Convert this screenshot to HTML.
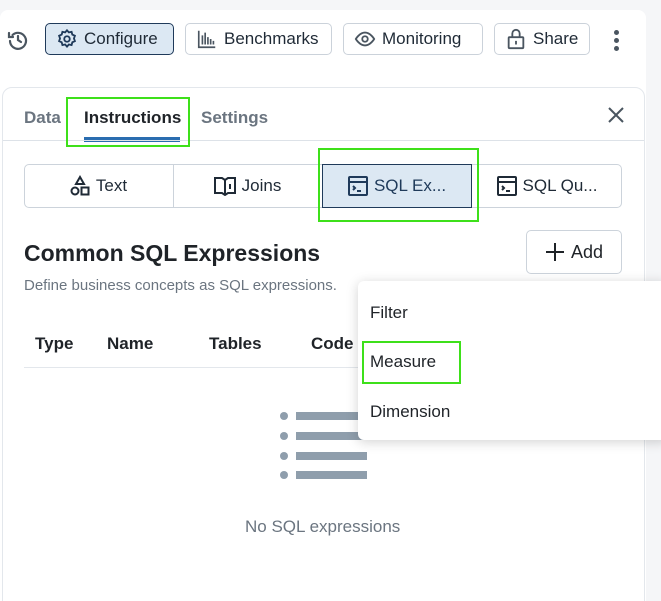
<!DOCTYPE html>
<html style="width:661px;height:601px;overflow:hidden"><head><style>
*{box-sizing:border-box;margin:0;padding:0}
body{width:661px;height:601px;overflow:hidden;background:#f5f6f8;font-family:"Liberation Sans",sans-serif;position:relative;color:#1f2328}
.abs{position:absolute}
.card{left:0;top:10px;width:646px;height:591px;background:#fff;border-radius:8px 8px 0 0}
.btn{position:absolute;top:23px;height:32px;border:1px solid #cbd2da;border-radius:5px;background:#fff;font-size:17px;color:#1f2a36;display:flex;align-items:center;padding-left:10px;gap:6px}
.panel{left:2px;top:87px;width:643px;height:530px;border:1px solid #e3e7ec;border-radius:10px;background:#fff}
.tab{position:absolute;top:108px;font-size:17px;font-weight:bold;color:#6b7580}
.seg{left:24px;top:164px;width:598px;height:44px;border:1px solid #ccd3db;border-radius:5px}
.si{position:absolute;top:164px;height:44px;display:flex;align-items:center;justify-content:center;gap:6px;font-size:17px;color:#1f2a36}
.th{position:absolute;top:334px;font-size:17px;font-weight:bold;color:#1f2328}
.green{position:absolute;border:2px solid #3ee01a}
.menu{left:358px;top:281px;width:310px;height:159px;background:#fff;border-radius:6px;box-shadow:0 2px 12px rgba(0,0,0,.18)}
.mi{position:absolute;left:370px;font-size:17px;color:#1f2328}
.bar{position:absolute;left:296px;width:71px;height:8px;background:#8f9eac}
.dot{position:absolute;left:280px;width:8px;height:8px;border-radius:50%;background:#8f9eac}
</style></head><body>
<div class="abs card"></div>
<svg class="abs" style="left:6px;top:28px" width="24" height="24" viewBox="0 0 24 24" fill="none" stroke="#4a5560" stroke-width="2.2" stroke-linecap="round"><path d="M4 13a8 8 0 1 0 2.5-6"/><path d="M3 5v4h4"/><path d="M12 8v4l3 2"/></svg>
<div class="btn" style="left:45px;width:129px;background:#dce8f3;border-color:#1f3a5a"><svg width="22" height="22" viewBox="0 0 24 24" fill="none" stroke="#1f3a5a" stroke-width="2"><circle cx="12" cy="12" r="3"/><path d="M12 2.5l2 2.3 3-.6.8 3 2.8 1.3-1 2.9 1 2.9-2.8 1.3-.8 3-3-.6-2 2.3-2-2.3-3 .6-.8-3-2.8-1.3 1-2.9-1-2.9 2.8-1.3.8-3 3 .6z"/></svg>Configure</div>
<div class="btn" style="left:185px;width:147px"><svg width="22" height="22" viewBox="0 0 24 24" fill="none" stroke="#4a5560" stroke-width="1.8"><path d="M3 3v18h18M7 8v10M10 5v13M13 10v8M16 12v6M19 14v4"/></svg>Benchmarks</div>
<div class="btn" style="left:343px;width:140px"><svg width="22" height="22" viewBox="0 0 24 24" fill="none" stroke="#4a5560" stroke-width="2"><path d="M2 12s4-7 10-7 10 7 10 7-4 7-10 7S2 12 2 12z"/><circle cx="12" cy="12" r="3"/></svg>Monitoring</div>
<div class="btn" style="left:494px;width:96px"><svg width="22" height="22" viewBox="0 0 24 24" fill="none" stroke="#4a5560" stroke-width="2"><rect x="4" y="10" width="16" height="12" rx="1"/><path d="M8 10V6a4 4 0 0 1 8 0v4M12 14v4"/></svg>Share</div>
<div class="abs" style="left:614px;top:30px;width:5px;height:5px;border-radius:50%;background:#4a5560;box-shadow:0 8px 0 #4a5560,0 16px 0 #4a5560"></div>
<div class="abs panel"></div>
<div class="tab" style="left:24px">Data</div>
<div class="tab" style="left:84px;color:#1f2328">Instructions</div>
<div class="abs" style="left:84px;top:137px;width:96px;height:5px;background:#2a6db0"></div>
<div class="tab" style="left:201px">Settings</div>
<svg class="abs" style="left:607px;top:106px" width="18" height="18" viewBox="0 0 18 18" stroke="#4a5560" stroke-width="2"><path d="M2 2l14 14M16 2L2 16"/></svg>
<div class="abs" style="left:3px;top:140px;width:641px;height:1px;background:#dde2e8"></div>
<div class="abs seg"></div>
<div class="abs" style="left:173px;top:165px;width:1px;height:42px;background:#ccd3db"></div>
<div class="abs" style="left:322px;top:164px;width:150px;height:44px;background:#dce8f3;border:1px solid #1f3a5a"></div>
<div class="si" style="left:24px;width:149px"><svg width="20" height="22" viewBox="0 0 20 22" fill="none" stroke="#1f2a36" stroke-width="2"><path d="M10 2l4 7H6z"/><circle cx="5" cy="16" r="3.5"/><rect x="11.5" y="12.5" width="7" height="7"/></svg>Text</div>
<div class="si" style="left:173px;width:149px"><svg width="22" height="20" viewBox="0 0 22 20" fill="none" stroke="#1f2a36" stroke-width="2"><path d="M1 2h7l3 2 3-2h7v15h-7l-3 2-3-2H1z"/><path d="M11 4v15M16 8v5"/></svg>Joins</div>
<div class="si" style="left:322px;width:150px;color:#1f3a5a"><svg width="20" height="20" viewBox="0 0 20 20" fill="none" stroke="#1f3a5a" stroke-width="2"><rect x="1" y="1" width="18" height="18" rx="1"/><path d="M1 6h18M5 10l2 2-2 2M9 15h4"/></svg>SQL Ex...</div>
<div class="si" style="left:472px;width:150px"><svg width="20" height="20" viewBox="0 0 20 20" fill="none" stroke="#1f2a36" stroke-width="2"><rect x="1" y="1" width="18" height="18" rx="1"/><path d="M1 6h18M5 10l2 2-2 2M9 15h4"/></svg>SQL Qu...</div>
<div class="abs" style="left:24px;top:240px;font-size:23px;font-weight:bold;color:#1f2328">Common SQL Expressions</div>
<div class="abs" style="left:24px;top:277px;font-size:15px;color:#6b7580">Define business concepts as SQL expressions.</div>
<div class="abs" style="left:526px;top:230px;width:96px;height:44px;border:1px solid #ccd3db;border-radius:5px;display:flex;align-items:center;justify-content:center;gap:6px;font-size:18px;color:#1f2328"><svg width="20" height="20" viewBox="0 0 20 20" stroke="#1f2328" stroke-width="2"><path d="M10 1v18M1 10h18"/></svg>Add</div>
<div class="th" style="left:35px">Type</div>
<div class="th" style="left:107px">Name</div>
<div class="th" style="left:209px">Tables</div>
<div class="th" style="left:311px">Code</div>
<div class="abs" style="left:24px;top:367px;width:620px;height:1px;background:#e3e7ec"></div>
<div class="dot" style="top:412px"></div><div class="bar" style="top:412px"></div>
<div class="dot" style="top:432px"></div><div class="bar" style="top:432px"></div>
<div class="dot" style="top:452px"></div><div class="bar" style="top:452px"></div>
<div class="dot" style="top:471px"></div><div class="bar" style="top:471px"></div>
<div class="abs" style="left:245px;top:517px;font-size:17px;color:#6b7580">No SQL expressions</div>
<div class="abs menu"></div>
<div class="mi" style="top:303px">Filter</div>
<div class="mi" style="top:352px">Measure</div>
<div class="mi" style="top:402px">Dimension</div>
<div class="green" style="left:66px;top:97px;width:124px;height:50px"></div>
<div class="green" style="left:318px;top:148px;width:161px;height:74px"></div>
<div class="green" style="left:362px;top:341px;width:99px;height:43px"></div>
</body></html>
